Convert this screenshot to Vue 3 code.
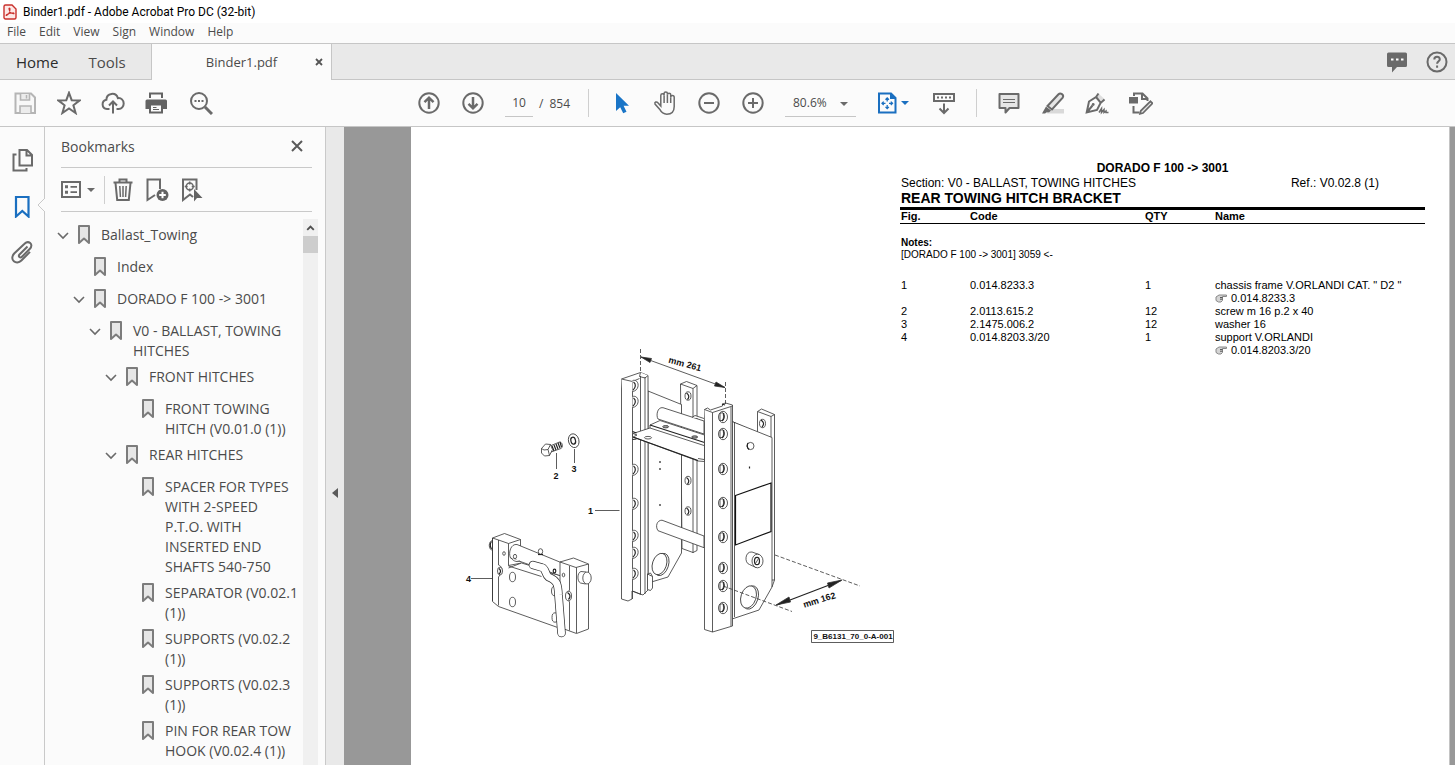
<script setup>
import { ref } from 'vue';

const menus = ['File', 'Edit', 'View', 'Sign', 'Window', 'Help'];

const page = ref('10');
const zoom = ref('80.6%');

// level = indentation depth, open = has an expanded chevron
const bookmarks = [
  { level: 0, open: true, text: 'Ballast_Towing' },
  { level: 1, open: false, text: 'Index' },
  { level: 1, open: true, text: 'DORADO F 100 -> 3001' },
  { level: 2, open: true, text: 'V0 - BALLAST, TOWING\nHITCHES' },
  { level: 3, open: true, text: 'FRONT HITCHES' },
  { level: 4, open: false, text: 'FRONT TOWING\nHITCH (V0.01.0 (1))' },
  { level: 3, open: true, text: 'REAR HITCHES' },
  { level: 4, open: false, text: 'SPACER FOR TYPES\nWITH 2-SPEED\nP.T.O. WITH\nINSERTED END\nSHAFTS 540-750' },
  { level: 4, open: false, text: 'SEPARATOR (V0.02.1\n(1))' },
  { level: 4, open: false, text: 'SUPPORTS (V0.02.2\n(1))' },
  { level: 4, open: false, text: 'SUPPORTS (V0.02.3\n(1))' },
  { level: 4, open: false, text: 'PIN FOR REAR TOW\nHOOK (V0.02.4 (1))' },
];

const parts = [
  { fig: '1', code: '0.014.8233.3', qty: '1', name: 'chassis frame V.ORLANDI CAT. " D2 "', link: '0.014.8233.3' },
  { fig: '2', code: '2.0113.615.2', qty: '12', name: 'screw m 16 p.2 x 40' },
  { fig: '3', code: '2.1475.006.2', qty: '12', name: 'washer 16' },
  { fig: '4', code: '0.014.8203.3/20', qty: '1', name: 'support V.ORLANDI', link: '0.014.8203.3/20' },
];

// Hole heights along the two uprights
const leftHoles = [386, 402, 470, 504, 536, 553, 574];
const rightHoles = [417, 434, 469, 503, 537, 568, 586, 608];
</script>

<template>
  <div class="app">
    <header class="title-bar">
      <svg class="logo" viewBox="0 0 14 16">
        <path d="M2.500 1H9l4 4v8.500a1.500 1.500 0 0 1-1.500 1.500h-9A1.500 1.500 0 0 1 1 13.500v-11A1.500 1.500 0 0 1 2.500 1z" fill="#fde9e7" stroke="#c9302c" stroke-width="1.400" />
        <path d="M3.500 11.500c2-1 3.500-4 3.500-6.500 0-1.300-1.200-1.200-1 0 .4 2.300 2.300 4.400 4.200 4.800 1.300.2 1-1-.4-.9-2.200 0-4.300.6-5.900 1.500-1 .6-.9 1.300-.4 1.100z" fill="none" stroke="#c9302c" stroke-width="1.100" />
      </svg>
      <span>Binder1.pdf - Adobe Acrobat Pro DC (32-bit)</span>
    </header>

    <nav class="menu-bar">
      <button v-for="m in menus" :key="m" type="button">{{ m }}</button>
    </nav>

    <div class="tab-strip">
      <div class="fixed-tabs">
        <button type="button" class="home">Home</button>
        <button type="button">Tools</button>
      </div>
      <div class="doc-tab">
        <button type="button" class="doc-name">Binder1.pdf</button>
        <button type="button" class="tab-close" aria-label="Close tab">
          <svg viewBox="0 0 8 8"><path d="M1 1l6 6M7 1L1 7" stroke="#555" stroke-width="1.800" /></svg>
        </button>
      </div>
      <div class="strip-right">
        <button type="button" aria-label="Notifications">
          <svg class="icon" viewBox="0 0 24 24">
            <path d="M3.500 2.500h17a1.500 1.500 0 0 1 1.500 1.500v11.500a1.500 1.500 0 0 1-1.500 1.500H12l-5 5.500V17H3.500A1.500 1.500 0 0 1 2 15.500V4a1.500 1.500 0 0 1 1.500-1.500z" fill="#6a6a6a" />
            <path d="M6 9.500h2.500M11 9.500h2.500M16 9.500h2.500" stroke="#fff" stroke-width="2" />
          </svg>
        </button>
        <button type="button" aria-label="Help">
          <svg class="icon" viewBox="0 0 24 24">
            <circle cx="12" cy="12" r="9.500" class="line" />
            <path d="M9.300 9.500c0-3.600 5.500-3.500 5.500-.3 0 2-2.700 2-2.700 4.500M12.100 15.500v2.200" class="line" />
          </svg>
        </button>
      </div>
    </div>

    <div class="toolbar">
      <button type="button" aria-label="Save">
        <svg class="icon" viewBox="0 0 24 24">
          <path d="M2.500 2.500h15.500l4 4V22H2.500z" fill="#f8f8f8" stroke="#b5b5b5" stroke-width="2" />
          <path d="M7.500 3v6h9V3M7 22v-7h11v7" fill="#ececec" stroke="#b5b5b5" stroke-width="1.600" />
          <path d="M13.500 4v3.500" stroke="#b5b5b5" stroke-width="1.500" />
        </svg>
      </button>
      <button type="button" aria-label="Star">
        <svg class="icon" viewBox="0 0 24 24"><path d="M12 1.800l2.700 7.400 8 .2-6.300 4.900 2.200 7.700L12 17.500 5.400 22l2.200-7.700L1.300 9.400l8-.2z" class="line" /></svg>
      </button>
      <button type="button" aria-label="Upload">
        <svg class="icon" viewBox="0 0 24 24">
          <path d="M8.500 18H6a4.700 4.700 0 0 1-.6-9.300C5.500 1.800 15 .7 16.900 7.200c3.200-.6 5.800 2 5.800 5.200 0 3-2.200 5.600-5 5.600h-2.200M12 22.500V10.500M8 14.500l4-4 4 4" class="line" />
        </svg>
      </button>
      <button type="button" aria-label="Print">
        <svg class="icon" viewBox="0 0 24 24">
          <path d="M4 1.500h14V7H4zM2 8.500h18.500A1.500 1.500 0 0 1 22 10v8h-4v4.500H4V18H.5v-8A1.500 1.500 0 0 1 2 8.500z" fill="#636363" />
          <path d="M6 3.500h10V7H6zM6 14.500h10v6H6z" fill="#fbfbfb" />
          <path d="M8 16.500h3.500M8 18.500h6" stroke="#636363" />
        </svg>
      </button>
      <button type="button" aria-label="Find">
        <svg class="icon" viewBox="0 0 24 24">
          <circle cx="10" cy="10" r="8" class="line" />
          <path d="M16 16l7 7" stroke="#6a6a6a" stroke-width="3" />
          <path d="M5.500 10h2M9 10h2M12.500 10h2" stroke="#6a6a6a" stroke-width="2" />
        </svg>
      </button>

      <button type="button" class="first-nav" aria-label="Previous page">
        <svg class="icon" viewBox="0 0 24 24"><circle cx="12" cy="12" r="9.700" class="line" /><path d="M12 18V7M7.500 11.200L12 6.700l4.500 4.500" class="bold" /></svg>
      </button>
      <button type="button" aria-label="Next page">
        <svg class="icon" viewBox="0 0 24 24"><circle cx="12" cy="12" r="9.700" class="line" /><path d="M12 6v11M7.500 12.800l4.500 4.500 4.500-4.500" class="bold" /></svg>
      </button>
      <div class="page-box">
        <input v-model="page" type="text" aria-label="Page number" />
        <span>/</span>
        <span>854</span>
      </div>
      <i class="divider"></i>
      <button type="button" aria-label="Select tool">
        <svg class="icon" viewBox="0 0 24 24"><path d="M7 2v18l4.200-3.800 3 6 3.300-1.500-2.900-6H20z" fill="#1a75c7" /></svg>
      </button>
      <button type="button" aria-label="Hand tool">
        <svg class="icon" viewBox="0 0 24 24">
          <path d="M7.800 14V4.500a1.600 1.600 0 0 1 3.300 0V2.600a1.600 1.600 0 0 1 3.300 0v1.200a1.600 1.600 0 0 1 3.300 0v2.500a1.600 1.600 0 0 1 3.500 0v9.200c0 5-3 7.700-7.400 7.700-3.600 0-5.400-1.700-7.200-5L2 13c-.7-2 1.600-2.800 2.900-1.200L7.800 15z" class="line thin" />
          <path d="M11.100 4.500V12M14.400 3.800V12M17.700 6.300V12" class="line thin" />
        </svg>
      </button>
      <button type="button" aria-label="Zoom out">
        <svg class="icon" viewBox="0 0 24 24"><circle cx="12" cy="12" r="9.700" class="line" /><path d="M7 12h10" class="line" /></svg>
      </button>
      <button type="button" aria-label="Zoom in">
        <svg class="icon" viewBox="0 0 24 24"><circle cx="12" cy="12" r="9.700" class="line" /><path d="M7 12h10M12 7v10" class="line" /></svg>
      </button>
      <div class="zoom-box">
        <select v-model="zoom" aria-label="Zoom level">
          <option>80.6%</option>
          <option>100%</option>
        </select>
        <svg class="caret" viewBox="0 0 8 4"><path d="M0 0h8L4 4z" fill="#6a6a6a" /></svg>
      </div>
      <button type="button" class="fit" aria-label="Fit page">
        <svg class="icon" viewBox="0 0 24 24">
          <path d="M4 2.500h12l4.500 4.500v14.500H4z" fill="none" stroke="#1a6fc0" stroke-width="2" />
          <path d="M15 2v6h6z" fill="#1a6fc0" />
          <path d="M12.200 7v3.500M12.200 14v3.500M7 12.300h3.500M14 12.300h3.500M10.500 8.700l1.700-1.700 1.700 1.700M10.500 15.900l1.700 1.700 1.700-1.700M8.700 10.600L7 12.300 8.700 14M15.800 10.600l1.700 1.700-1.700 1.700" fill="none" stroke="#1a6fc0" stroke-width="1.300" />
        </svg>
        <svg class="caret-inline" viewBox="0 0 8 4"><path d="M0 0h8L4 4z" fill="#1a6fc0" /></svg>
      </button>
      <button type="button" aria-label="Scrolling mode">
        <svg class="icon" viewBox="0 0 24 24">
          <path d="M2 3h20v7H2z" class="line" />
          <path d="M5 6.500h14" stroke="#6a6a6a" stroke-width="2" stroke-dasharray="2 2" />
          <path d="M12 12.500V22M7.500 17.500L12 22l4.500-4.500" class="line" />
        </svg>
      </button>
      <i class="divider"></i>
      <button type="button" aria-label="Comment">
        <svg class="icon" viewBox="0 0 24 24">
          <path d="M2.500 3h19v14H12.500l-4 4.500V17h-6z" fill="#e6e6e6" stroke="#6a6a6a" stroke-width="2" stroke-linejoin="round" />
          <path d="M6 8.500h12M6 11.500h12" stroke="#6a6a6a" stroke-width="1.200" />
        </svg>
      </button>
      <button type="button" aria-label="Highlight">
        <svg class="icon" viewBox="0 0 24 24">
          <path d="M9 18h14v4.500H6z" fill="#d9d9d9" />
          <path d="M6.500 15L17.500 3.300c2-2 5.800.5 4.200 3.300L11 18.500z" fill="#e6e6e6" stroke="#6a6a6a" stroke-width="2" />
          <path d="M5 15.500l5 4-1.800 1.800-3 .2-1 1H1z" fill="#6a6a6a" />
        </svg>
      </button>
      <button type="button" aria-label="Sign">
        <svg class="icon" viewBox="0 0 24 24">
          <path d="M14 3l6 5.500-2 2.500-6.500-5.500z" fill="#dedede" />
          <path d="M13.500 2.500L11 6 4 10.500 1.700 21.500 12 19l3.500-7 4-3.500M11 6l5 6M1.700 21.500l5.800-7" class="line" />
          <circle cx="8.200" cy="13.500" r="1.400" fill="#6a6a6a" />
          <path d="M14 21.500l2.500-4v4l2.500-3v3l2-1.500v1.500h2.500" class="line thin" />
        </svg>
      </button>
      <button type="button" aria-label="Edit pages">
        <svg class="icon" viewBox="0 0 24 24">
          <path d="M5 5V2.500h8.500l5 5V10M13 2.500V8h5M4.500 15v6.500h6" class="line" />
          <path d="M0 6h9v6.500H0z" fill="#6a6a6a" />
          <path d="M21.500 10.300l2 2L14 22l-3 .8.800-3z" fill="#e6e6e6" stroke="#6a6a6a" stroke-width="1.700" />
        </svg>
      </button>
    </div>

    <div class="body">
      <aside class="rail">
        <button type="button" aria-label="Page thumbnails">
          <svg class="icon" viewBox="0 0 24 24">
            <path d="M9.500 2h7.500l5 5v10.500H9.500zM16.500 2v5.500H22M6.500 6.500h-3V22.500h13v-2.500" class="line" />
          </svg>
        </button>
        <button type="button" class="active" aria-label="Bookmarks">
          <svg class="icon" viewBox="0 0 24 24"><path d="M6 3h12.500v19.500l-6.200-5.500L6 22.500z" fill="none" stroke="#1a6fc0" stroke-width="2.200" /></svg>
        </button>
        <button type="button" aria-label="Attachments">
          <svg class="icon" viewBox="0 0 24 24">
            <path d="M17.500 6.500l-8 8c-1.700 2 .7 4 2.400 2.300l8-8c4.200-5-1.600-8.800-5.400-5L4.200 13.500c-5.500 6.300 2.200 12 7.200 7l8.600-8.600" class="line" />
          </svg>
        </button>
      </aside>

      <section class="panel">
        <svg class="notch" viewBox="0 0 8 14"><path d="M8 0L1 7l7 7" fill="#fbfbfb" stroke="#c9c9c9" /></svg>
        <div class="panel-head">
          <h2>Bookmarks</h2>
          <button type="button" aria-label="Close panel">
            <svg viewBox="0 0 12 12"><path d="M1 1l10 10M11 1L1 11" stroke="#5a5a5a" stroke-width="2" /></svg>
          </button>
        </div>
        <div class="panel-tools">
          <button type="button" class="options" aria-label="Options">
            <svg class="icon" viewBox="0 0 24 24">
              <path d="M1 4h18v15H1z" class="line" />
              <path d="M4 8.800h3M4 14.200h3" stroke="#6a6a6a" stroke-width="3" />
              <path d="M9.500 8.800H16M9.500 14.200H16" stroke="#6a6a6a" stroke-width="1.800" />
            </svg>
            <svg class="caret-inline" viewBox="0 0 8 4"><path d="M0 0h8L4 4z" fill="#6a6a6a" /></svg>
          </button>
          <i class="divider"></i>
          <button type="button" aria-label="Delete bookmark">
            <svg class="icon" viewBox="0 0 24 24">
              <path d="M2.500 4.500h19M8.500 4V1.500h7V4M4.500 5l1.700 17h11.600L19.500 5" class="line" />
              <path d="M8.800 8l.6 11M12 8v11M15.200 8l-.6 11" class="line thin" />
            </svg>
          </button>
          <button type="button" aria-label="New bookmark">
            <svg class="icon" viewBox="0 0 24 24">
              <path d="M10 17l-7.500 5V1.500H15V11" class="line" />
              <circle cx="17.500" cy="17" r="6" fill="#636363" />
              <path d="M14.200 17h6.600M17.500 13.700v6.600" stroke="#fff" stroke-width="2" />
            </svg>
          </button>
          <button type="button" aria-label="Find bookmark">
            <svg class="icon" viewBox="0 0 24 24">
              <path d="M14 19l-3-2.500L4 22V1.500h13.500V12" class="line" />
              <circle cx="10.700" cy="8.500" r="3.500" class="line thin" />
              <path d="M10.700 3.500v3M10.700 10.500v3M5.700 8.500h3M12.700 8.500h3" class="line thin" />
              <path d="M15 11v12.500l3-3.500h5.500z" fill="#636363" />
            </svg>
          </button>
        </div>
        <div class="tree-wrap">
          <ul class="tree">
            <li v-for="(b, i) in bookmarks" :key="i" :style="{ paddingLeft: b.level * 16 + 'px' }">
              <svg class="chevron" viewBox="0 0 12 20"><path v-if="b.open" d="M1 8l5 5 5-5" fill="none" stroke="#6a6a6a" stroke-width="1.600" /></svg>
              <svg class="mark" viewBox="0 0 12 20"><path d="M1 1h10v17l-5-4.500L1 18z" fill="#e6e6e6" stroke="#7c7c7c" stroke-width="2" stroke-linejoin="round" /></svg>
              <a href="#">{{ b.text }}</a>
            </li>
          </ul>
          <div class="scrollbar">
            <svg class="scroll-up" viewBox="0 0 16 17"><path d="M4.500 11L8 7.500l3.500 3.500" fill="none" stroke="#505050" stroke-width="2" /></svg>
            <div class="thumb"></div>
          </div>
        </div>
      </section>

      <button type="button" class="splitter" aria-label="Collapse panel">
        <svg viewBox="0 0 6 10"><path d="M6 0v10L0 5z" fill="#5a5a5a" /></svg>
      </button>

      <main class="canvas">
        <article class="page">
          <figure class="figure">
            <svg class="drawing" viewBox="452 340 446 310" role="img" aria-label="Rear towing hitch bracket">
              <!-- rear strip and inner plate -->
              <path d="M680.500 384l6-2.500 10.500 4v165l-4 2-11-4zM680.500 384l12.500 4.500V553M693 388.500l4-3" />
              <path d="M648 391l33.500 13.500V553L668 577l-20 6z" />
              <g v-for="y in [396, 480.5, 511]" :key="'b' + y">
                <ellipse cx="688" :cy="y" rx="3" ry="4.200" />
                <path :d="`M686.500 ${y - 3}q4 3 1 6.500`" class="heavy" />
              </g>
              <path d="M660 461v2M660 468v2M660 504v2" class="heavy" />
              <ellipse cx="661.500" cy="564.500" rx="7" ry="11.500" transform="rotate(18 661.500 564.500)" />
              <ellipse cx="659.500" cy="564" rx="7" ry="11" transform="rotate(18 659.500 564)" />
              <!-- left upright -->
              <path d="M621.500 379l19-6.500 7.500 3V590l-5 5-11-4v8l-4 2-6.500-2z" />
              <path d="M621.500 379l11 2.500V599M640.500 376V594M645 377V594M640.500 372.500l-1 4 5.500 1.500 3-2.500M632.500 381.500l7-3" />
              <path d="M632.500 591l8.500 3.500" />
              <path d="M647.500 574l5 2.500V588l-2 2.500-3-1zM647.500 574l3-1 2 3.500" />
              <g v-for="y in leftHoles" :key="'l' + y">
                <path :d="`M632.500 ${y - 5.500}c7-2 8 10 0 11`" />
                <path :d="`M633.500 ${y - 4}c3 2 2 6-.5 8`" class="heavy" />
              </g>
              <!-- shelf and cross tubes -->
              <path d="M704 421l-41-13.300c-6-1-7 8.300-5 11.300l46 15z" />
              <path d="M692 417.500l3-2 9 3" />
              <path d="M633 433.500l17-5.500v-3l10-4.500 44.500 14.500V461.500l-6.500-.5-65-24z" />
              <path d="M650 425l54.500 17.500M633 437l65 23.500" class="heavy" />
              <path d="M650 428l54 17.500M633 433.500l4 1.500-4 2M698 458.500l6 1" />
              <path d="M632.500 431.500l4 1.500M632.500 439.500l4-.5" class="heavy" />
              <ellipse cx="648" cy="437.700" rx="3.500" ry="1.300" />
              <ellipse cx="665.700" cy="426.700" rx="3" ry="1.200" class="plate-hole" />
              <ellipse cx="694.700" cy="437" rx="3" ry="1.200" class="plate-hole" />
              <path d="M704 536l-42-15.800c-5 0-7 6-4 10.500l46 17z" />
              <!-- right side plate -->
              <path d="M757.500 433v-21.500l4-2.500 13 5.500V580l-2.500 7-13 23-27 9V421.500z" />
              <path d="M732 421.500l40 16V587M757.500 411.500l13.500 5V437M771 416.500l3.500-2M774.500 580h-2.500" />
              <ellipse cx="762.500" cy="423.500" rx="3" ry="4.200" />
              <path d="M761 420q4.500 3 1 7" class="heavy" />
              <ellipse cx="750.500" cy="446" rx="3.500" ry="3.600" />
              <path d="M748 443q-2 3.500 1 6.500" class="heavy" />
              <path d="M749.500 466.500v2" class="heavy" />
              <path d="M735.500 495.500L771 483v48.500L735.500 545z" class="heavy-open" />
              <path d="M759 554.500l-7-2.500c-7-1-8 11-2.500 12.500l6.500 3z" />
              <ellipse cx="757.500" cy="561" rx="5.500" ry="6.800" />
              <ellipse cx="757" cy="561" rx="2.500" ry="3.700" class="heavy" />
              <path d="M755.500 563.500l3-5" />
              <ellipse cx="750.500" cy="597.500" rx="7.500" ry="12" transform="rotate(18 750.500 597.500)" />
              <ellipse cx="748.500" cy="597" rx="7.500" ry="11.500" transform="rotate(18 748.500 597)" />
              <!-- right upright -->
              <path d="M704.500 409.500l3-1.500 3 2 12-4v-2l3-1 7 2V626l-20 6-8-2.500z" />
              <path d="M704.500 409.500l8 3V632M712.500 412.500l20-6.500M734.500 422v195M731 407v219" />
              <path d="M722 404l3 1" class="heavy" />
              <g v-for="y in rightHoles" :key="'r' + y">
                <ellipse cx="723" :cy="y" rx="4.500" ry="5.700" />
                <path :d="`M720 ${y - 3.500}v7h2c2-1 2-6 .5-8z`" />
                <path :d="`M722 ${y + 4}c3-2 2.500-5 1.500-8`" class="heavy" />
              </g>
              <!-- dimensions -->
              <path d="M640.500 349v24M725.500 382v22" stroke-dasharray="4 2" />
              <path d="M641 357l84 30.500" />
              <path d="M641 357l10.500 1.500-1.500 4zM725 387.500l-10.500-1.500 1.500-4z" class="dark" />
              <path d="M775 555l85 31M723 586l69 25.500" stroke-dasharray="4 2" class="open" />
              <path d="M777 605l64-24.500" class="heavy" />
              <path d="M776 605l13-8 1.500 5zM842 580l-13 8-1.500-5z" class="dark" />
              <text x="685" y="367" font-size="9" transform="rotate(15 685 364)">mm 261</text>
              <text x="819" y="603" font-size="9" transform="rotate(-17 819 599)">mm 162</text>
              <path d="M811.500 630.500h82v12h-82z" />
              <text x="853" y="639" font-size="8">9_B6131_70_0-A-001</text>
              <!-- screw and washer -->
              <path d="M550 446l9.500-4c3 0 4 5 1.500 6.500l-10 3.500z" />
              <path d="M552 446l2 5M554 445l2 5M556 444l2 5M558 443l2 5M560 442l1.500 5" class="heavy" />
              <path d="M541.500 448.500l4-4.500 5 .5 2 5-3 6-5 .5-3-3zM541.500 448.500l2.500 1.500 4-.5 2.500-5M548 449.500l1.500 6" />
              <ellipse cx="573.700" cy="440.700" rx="5.200" ry="7" transform="rotate(-15 573.700 440.700)" />
              <ellipse cx="573.200" cy="440.700" rx="2.300" ry="3.500" transform="rotate(-15 573.200 440.700)" class="heavy" />
              <path d="M556.500 453v16M574.500 449v14M595 510.500h24.500M471 578.500h21" />
              <text x="590.500" y="514" font-size="9">1</text>
              <text x="556" y="479" font-size="9">2</text>
              <text x="574" y="472" font-size="9">3</text>
              <text x="468.500" y="582" font-size="9">4</text>
              <!-- support -->
              <path d="M493 540.500c-5 0-5 9.500 0 10z" />
              <path d="M491.500 541.500c-1.500 2-1.500 5 0 7.500" class="heavy" />
              <path d="M492.500 538l12-4.500 16 6v26l40 10v53l-62-22-6-5z" />
              <path d="M492.500 538l6 2 10 3.500 12-4M508.500 543.500V565.500l13-2.500M498.500 540v25c3 1 4 4 3 8l-3 4V605.500M492.500 538v63" />
              <path d="M508.500 566l33 10.500M508.500 568l5-2 8-3 30 9" />
              <path d="M561 562.500L517 544.500c-6-1-9 8-6.500 13.500L561 576z" />
              <path d="M511 558c3 4 7 4 9 3" />
              <ellipse cx="540.500" cy="551.500" rx="2.200" ry="2.800" />
              <path d="M538 554.500h5" class="heavy" />
              <ellipse cx="504" cy="553.500" rx="1.300" ry="1.800" />
              <ellipse cx="515" cy="556.500" rx="1.600" ry="2.200" />
              <ellipse cx="554.500" cy="571" rx="1.300" ry="1.800" class="heavy" />
              <ellipse cx="500" cy="571" rx="2.500" ry="4" />
              <path d="M499 568.500q3 2.500 0 5.500" class="heavy" />
              <ellipse cx="512.500" cy="577" rx="3" ry="4.700" />
              <ellipse cx="512.500" cy="602" rx="3" ry="4.700" />
              <ellipse cx="554.500" cy="591" rx="3" ry="4.700" />
              <ellipse cx="555" cy="617.500" rx="3" ry="4.700" />
              <path d="M560 562l13.500-4 15 6v65l-12 4.500-16.500-6z" />
              <path d="M560 562l16 5.500 12.500-3.500M576.500 567.500V633M569.500 566v24c-2 2-2 10 0 12v28.500" />
              <ellipse cx="563.500" cy="575" rx="1.300" ry="1.800" />
              <ellipse cx="568.500" cy="596" rx="3" ry="4.700" />
              <path d="M567.500 592.500q4.500 3 1 7" class="heavy" />
              <path d="M586 572l-5-.5c-4 1-4 10-.5 11.500l5 1z" />
              <ellipse cx="587" cy="578" rx="4.200" ry="6" />
              <path d="M533 565l9 2.500c4 1 3 7 6.500 9.500 9 3.500 9.500 8 10 18l3 38" class="rod-edge" />
              <path d="M533 565l9 2.500c4 1 3 7 6.500 9.500 9 3.500 9.500 8 10 18l3 38" class="rod" />
            </svg>
          </figure>

          <div class="sheet">
            <h1>DORADO F 100 -&gt; 3001</h1>
            <div class="section-line">
              <span>Section: V0 - BALLAST, TOWING HITCHES</span>
              <span class="reference">Ref.: V0.02.8 (1)</span>
            </div>
            <h3>REAR TOWING HITCH BRACKET</h3>
            <table>
              <thead>
                <tr>
                  <th class="col-fig">Fig.</th>
                  <th class="col-code">Code</th>
                  <th class="col-qty">QTY</th>
                  <th>Name</th>
                </tr>
              </thead>
              <tbody>
                <tr>
                  <td colspan="4" class="notes"><b>Notes:</b><br />[DORADO F 100 -&gt; 3001] 3059 &lt;-</td>
                </tr>
                <tr v-for="p in parts" :key="p.fig">
                  <td>{{ p.fig }}</td>
                  <td>{{ p.code }}</td>
                  <td>{{ p.qty }}</td>
                  <td>
                    {{ p.name }}
                    <a v-if="p.link" href="#" class="part-link">
                      <svg viewBox="0 0 12 9">
                        <path d="M1 3l3-2h7.500v1.500H7.500v4L6 8H3.500L1 6.500z" fill="#d5d5d5" stroke="#888" stroke-width="1" />
                        <path d="M5 3.500h2.500M5 5.200h2.500" stroke="#555" />
                      </svg>
                      <span>{{ p.link }}</span>
                    </a>
                  </td>
                </tr>
              </tbody>
            </table>
          </div>
        </article>
      </main>
    </div>
  </div>
</template>

<style>
body {
  margin: 0;
  overflow: hidden;
}
</style>

<style scoped>
.app {
  height: 100vh;
  display: flex;
  flex-direction: column;
  background: #fbfbfb;
  color: #4b4b4b;
  font-family: "Open Sans", "Noto Sans", sans-serif;
  font-size: 12px;
  overflow: hidden;
}

button {
  border: none;
  background: none;
  padding: 0;
  color: inherit;
  font: inherit;
  cursor: pointer;
}

svg {
  display: block;
  flex: none;
}

.icon {
  width: 24px;
  height: 24px;
}

.line {
  fill: none;
  stroke: #6a6a6a;
  stroke-width: 2;
}

.thin {
  stroke-width: 1.5;
}

.bold {
  fill: none;
  stroke: #6a6a6a;
  stroke-width: 2.5;
}

.title-bar {
  display: flex;
  align-items: center;
  gap: 6px;
  height: 23px;
  padding-left: 3px;
  background: #fff;
  color: #000;
  font-family: Roboto, "Open Sans", sans-serif;
}

.logo {
  width: 14px;
  height: 16px;
}

.menu-bar {
  display: flex;
  align-items: flex-start;
  gap: 13px;
  height: 20px;
  padding-left: 7px;
}

.tab-strip {
  display: flex;
  box-sizing: border-box;
  height: 37px;
  background: #e9e9e9;
  border-top: 1px solid #c6c6c6;
}

.fixed-tabs {
  display: flex;
  gap: 30px;
  box-sizing: border-box;
  width: 151px;
  padding-left: 16px;
  border-bottom: 1px solid #c6c6c6;
  font-size: 15px;
}

.home {
  color: #2c2c2c;
}

.doc-tab {
  display: flex;
  align-items: center;
  box-sizing: border-box;
  width: 181px;
  padding-right: 8px;
  background: #fbfbfb;
  border-left: 1px solid #c6c6c6;
  border-right: 1px solid #c6c6c6;
}

.doc-name {
  flex: 1;
  padding-left: 16px;
  font-size: 13px;
}

.tab-close svg {
  width: 8px;
  height: 8px;
}

.strip-right {
  flex: 1;
  display: flex;
  justify-content: flex-end;
  align-items: center;
  gap: 16px;
  padding-right: 6px;
  border-bottom: 1px solid #c6c6c6;
}

.toolbar {
  display: flex;
  align-items: center;
  height: 46px;
  padding-left: 3px;
  border-bottom: 1px solid #c6c6c6;
}

.toolbar button {
  display: flex;
  align-items: center;
  justify-content: center;
  width: 44px;
  height: 40px;
}

.toolbar .first-nav {
  margin-left: 184px;
}

.divider {
  width: 1px;
  height: 28px;
  margin: 0 10px;
  background: #cfcfcf;
}

.page-box {
  display: flex;
  align-items: center;
  gap: 6px;
  width: 73px;
  padding-left: 10px;
}

.page-box input {
  box-sizing: border-box;
  width: 28px;
  height: 27px;
  padding: 0;
  border: none;
  border-bottom: 1px solid #c6c6c6;
  background: none;
  color: inherit;
  font: inherit;
  text-align: center;
}

.zoom-box {
  position: relative;
  width: 71px;
  margin: 0 9px 0 10px;
}

.zoom-box select {
  appearance: none;
  width: 100%;
  height: 27px;
  padding: 0 8px;
  border: none;
  border-bottom: 1px solid #c6c6c6;
  border-radius: 0;
  background: none;
  color: inherit;
  font: inherit;
}

.caret {
  position: absolute;
  right: 8px;
  top: 12px;
  width: 8px;
  height: 4px;
  pointer-events: none;
}

.caret-inline {
  width: 8px;
  height: 4px;
}

.toolbar .fit {
  justify-content: flex-start;
  width: 57px;
  padding-left: 10px;
  gap: 2px;
}

.body {
  flex: 1;
  display: flex;
  min-height: 0;
}

.rail {
  display: flex;
  flex-direction: column;
  align-items: center;
  gap: 22px;
  width: 44px;
  padding-top: 21px;
  border-right: 1px solid #c9c9c9;
}

.panel {
  position: relative;
  display: flex;
  flex-direction: column;
  width: 280px;
  border-right: 1px solid #c9c9c9;
}

.notch {
  position: absolute;
  left: -8px;
  top: 71px;
  width: 8px;
  height: 14px;
}

.panel-head {
  display: flex;
  align-items: center;
  justify-content: space-between;
  height: 38px;
  margin: 0 13px 0 16px;
  padding: 0 9px 2px 0;
  border-bottom: 1px solid #c9c9c9;
}

.panel-head h2 {
  margin: 0;
  font-size: 14px;
  font-weight: 400;
}

.panel-head svg {
  width: 12px;
  height: 12px;
}

.panel-tools {
  display: flex;
  align-items: center;
  gap: 10px;
  height: 43px;
  margin: 0 13px 0 16px;
  border-bottom: 1px solid #c9c9c9;
}

.panel-tools .divider {
  margin: 0 -4px 0 -1px;
}

.options {
  display: flex;
  align-items: center;
  gap: 2px;
}

.tree-wrap {
  flex: 1;
  display: flex;
  min-height: 0;
  padding: 7px 7px 0 12px;
}

.tree {
  flex: 1;
  min-width: 0;
  margin: 0;
  padding: 0;
  list-style: none;
  overflow: hidden;
}

.tree li {
  display: flex;
  box-sizing: border-box;
  min-height: 32px;
  padding-top: 6px;
}

.tree a {
  color: inherit;
  font-size: 14px;
  line-height: 20px;
  text-decoration: none;
  white-space: pre;
}

.chevron {
  width: 12px;
  height: 20px;
  margin-right: 9px;
}

.mark {
  width: 12px;
  height: 20px;
  margin-right: 11px;
}

.scrollbar {
  width: 15px;
  background: #f0f0f0;
}

.scroll-up {
  width: 15px;
  height: 17px;
}

.thumb {
  height: 17px;
  background: #cdcdcd;
}

.splitter {
  display: flex;
  align-items: center;
  justify-content: center;
  width: 18px;
  padding-top: 94px;
  background: #e9e9e9;
}

.splitter svg {
  width: 6px;
  height: 10px;
}

.canvas {
  flex: 1;
  display: flex;
  min-width: 0;
  padding: 0 5px 0 67px;
  background: #989898;
}

.page {
  flex: 1;
  display: flex;
  min-width: 0;
  background: #fff;
  border-right: 1px solid #c4c4c4;
  color: #000;
  font-family: "Liberation Sans", Arial, sans-serif;
}

.figure {
  flex: none;
  margin: 213px 2px 0 41px;
}

.drawing {
  width: 446px;
  height: 310px;
  fill: #fff;
  stroke: #333;
  stroke-width: 0.8;
}

.drawing text {
  fill: #111;
  stroke: none;
  font-weight: 700;
  text-anchor: middle;
}

.drawing .open {
  fill: none;
}

.drawing .heavy {
  fill: none;
  stroke: #222;
  stroke-width: 1.2;
}

.drawing .heavy-open {
  stroke: #111;
  stroke-width: 1.2;
}

.drawing .dark {
  fill: #222;
}

.drawing .plate-hole {
  fill: #999;
}

.drawing .rod-edge {
  fill: none;
  stroke: #333;
  stroke-width: 8.5;
  stroke-linecap: round;
}

.drawing .rod {
  fill: none;
  stroke: #fff;
  stroke-width: 7;
  stroke-linecap: round;
}

.sheet {
  flex: 1;
  min-width: 0;
  padding: 34px 24px 0 0;
}

.sheet h1 {
  margin: 0;
  font-size: 12px;
  line-height: 14px;
  text-align: center;
}

.section-line {
  display: flex;
  justify-content: space-between;
  padding: 0 46px 0 1px;
  line-height: 16px;
}

.sheet h3 {
  margin: 0;
  padding: 0 0 1px 1px;
  font-size: 14px;
  line-height: 15px;
}

table {
  width: 100%;
  table-layout: fixed;
  border-collapse: collapse;
  border-top: 3px solid #000;
  font-size: 11px;
  line-height: 13px;
}

th,
td {
  padding: 0 0 0 1px;
  text-align: left;
  vertical-align: top;
}

thead {
  border-bottom: 1px solid #000;
}

.col-fig {
  width: 68px;
}

.col-code {
  width: 174px;
}

.col-qty {
  width: 69px;
}

.notes {
  padding: 13px 0 18px 1px;
  font-size: 10px;
  line-height: 12px;
}

.part-link {
  display: flex;
  align-items: center;
  gap: 4px;
  color: inherit;
  text-decoration: none;
}

.part-link svg {
  width: 12px;
  height: 9px;
}
</style>
